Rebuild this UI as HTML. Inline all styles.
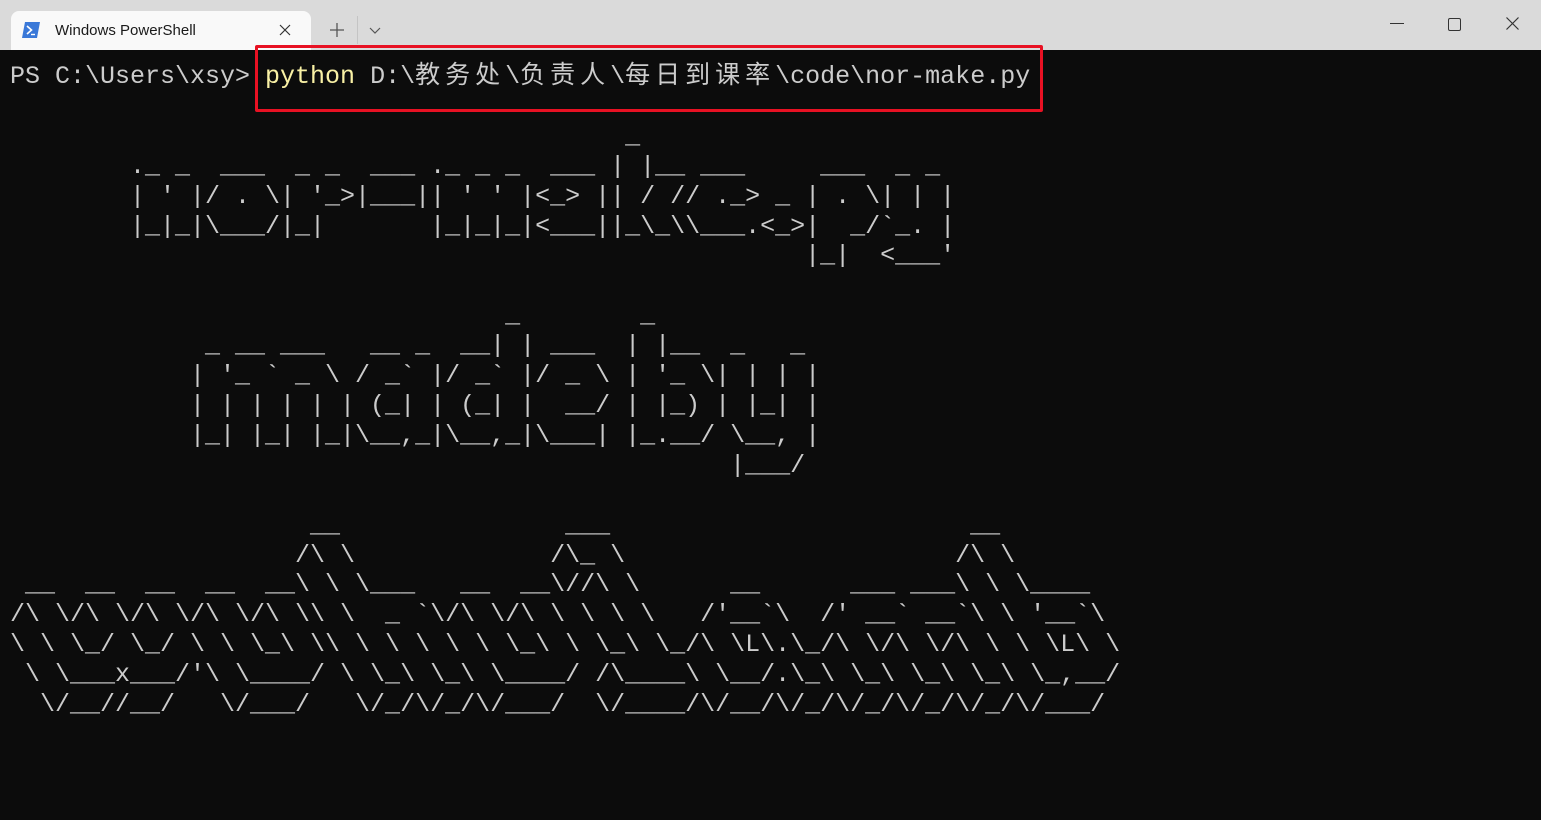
<!DOCTYPE html>
<html><head><meta charset="utf-8"><style>
html,body{margin:0;padding:0;}
body{width:1541px;height:820px;overflow:hidden;background:#0c0c0c;position:relative;font-family:"Liberation Sans",sans-serif;}
#bar{position:absolute;left:0;top:0;width:1541px;height:50px;background:#dadada;}
#tab{position:absolute;left:11px;top:11px;width:300px;height:39px;background:#f9f9f9;border-radius:8px 8px 0 0;}
#tab .t{position:absolute;left:44px;top:11px;font-size:15px;color:#1a1a1a;}
#term{position:absolute;left:10px;top:59px;margin:0;font-family:"Liberation Mono","Noto Sans CJK SC",monospace;font-size:25px;line-height:29.9px;color:#cccccc;white-space:pre;}
.y{color:#f9f1a5;}
.cjk{font-family:"Noto Sans CJK SC","Liberation Mono",monospace;letter-spacing:5px;font-size:25px;}
#box{position:absolute;left:255px;top:45px;width:782px;height:61px;border:3px solid #e81123;border-radius:2px;}
</style></head><body>
<div id="bar">
 <div id="tab">
  <svg style="position:absolute;left:11px;top:11px" width="18" height="16" viewBox="0 0 18 16"><path d="M3 0H18L15 16H0Z" fill="#3a78d8"/><path d="M5 4L9.5 8L5 12" stroke="#fff" stroke-width="1.6" fill="none"/><path d="M9 12.5H13" stroke="#fff" stroke-width="1.4"/></svg>
  <div class="t">Windows PowerShell</div>
  <svg style="position:absolute;left:268px;top:13px" width="12" height="12"><path d="M1 1L11 11M11 1L1 11" stroke="#333" stroke-width="1.2"/></svg>
 </div>
 <svg style="position:absolute;left:330px;top:23px" width="14" height="14"><path d="M7 0V14M0 7H14" stroke="#555" stroke-width="1.3"/></svg>
 <div style="position:absolute;left:357px;top:16px;width:1px;height:28px;background:#c4c4c4"></div>
 <svg style="position:absolute;left:369px;top:27px" width="12" height="7"><path d="M1 1L6 6L11 1" stroke="#555" stroke-width="1.2" fill="none"/></svg>
 <div style="position:absolute;left:1390px;top:23px;width:14px;height:1.2px;background:#333"></div>
 <div style="position:absolute;left:1448px;top:18px;width:11px;height:11px;border:1.2px solid #333;border-radius:2px"></div>
 <svg style="position:absolute;left:1506px;top:17px" width="13" height="13"><path d="M0.5 0.5L12.5 12.5M12.5 0.5L0.5 12.5" stroke="#333" stroke-width="1.2"/></svg>
</div>
<div id="box"></div>
<pre id="term">PS C:\Users\xsy&gt; <span class="y">python</span> D:\<span class="cjk">教务处</span>\<span class="cjk">负责人</span>\<span class="cjk">每日到课率</span>\code\nor-make.py

                                         _
        ._ _  ___  _ _  ___ ._ _ _  ___ | |__ ___     ___  _ _
        | ' |/ . \| '_&gt;|___|| ' ' |&lt;_&gt; || / // ._&gt; _ | . \| | |
        |_|_|\___/|_|       |_|_|_|&lt;___||_\_\\___.&lt;_&gt;|  _/`_. |
                                                     |_|  &lt;___'

                                 _        _
             _ __ ___   __ _  __| | ___  | |__  _   _
            | '_ ` _ \ / _` |/ _` |/ _ \ | '_ \| | | |
            | | | | | | (_| | (_| |  __/ | |_) | |_| |
            |_| |_| |_|\__,_|\__,_|\___| |_.__/ \__, |
                                                |___/

                    __               ___                        __
                   /\ \             /\_ \                      /\ \
 __  __  __  __  __\ \ \___   __  __\//\ \      __      ___ ___\ \ \____
/\ \/\ \/\ \/\ \/\ \\ \  _ `\/\ \/\ \ \ \ \   /'__`\  /' __` __`\ \ '__`\
\ \ \_/ \_/ \ \ \_\ \\ \ \ \ \ \ \_\ \ \_\ \_/\ \L\.\_/\ \/\ \/\ \ \ \L\ \
 \ \___x___/'\ \____/ \ \_\ \_\ \____/ /\____\ \__/.\_\ \_\ \_\ \_\ \_,__/
  \/__//__/   \/___/   \/_/\/_/\/___/  \/____/\/__/\/_/\/_/\/_/\/_/\/___/
</pre>
</body></html>
